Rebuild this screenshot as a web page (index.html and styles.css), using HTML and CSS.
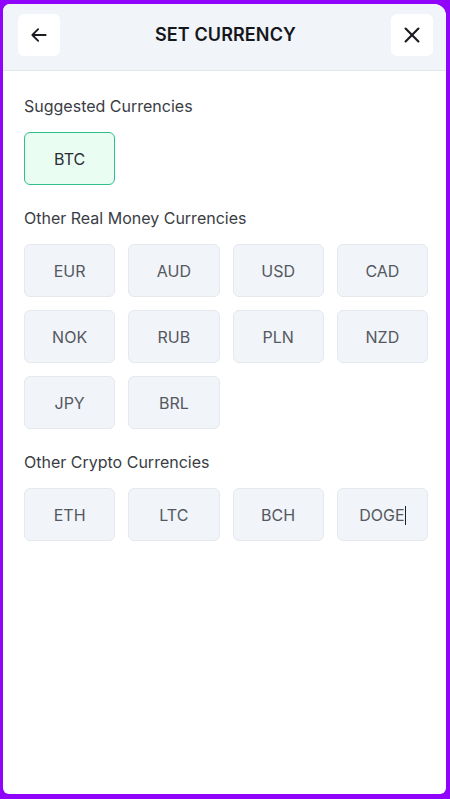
FILE: index.html
```html
<!DOCTYPE html>
<html lang="en">
<head>
  <meta charset="UTF-8"/>
  <meta name="viewport" content="width=device-width, initial-scale=1"/>
  <title>Set Currency</title>
  <link rel="stylesheet" href="styles.css">
</head>
<body>
  <div class="modal">
    <!-- Header -->
    <div class="modal-header">
      <button class="icon-btn" aria-label="Back">
        <svg width="20" height="20" viewBox="0 0 24 24" fill="none" stroke="#1b1d22" stroke-width="2.2" stroke-linecap="round" stroke-linejoin="round"><path d="M20 12H4M11 5l-7 7 7 7"/></svg>
      </button>
      <div class="modal-title">SET CURRENCY</div>
      <button class="icon-btn" aria-label="Close">
        <svg width="22" height="22" viewBox="0 0 24 24" fill="none" stroke="#1b1d22" stroke-width="2.4" stroke-linecap="round"><path d="M5 5l14 14M19 5L5 19"/></svg>
      </button>
    </div>

    <div class="modal-body">
      <div class="section-label">Suggested Currencies</div>
      <div class="cur-grid">
        <button class="cur active">BTC</button>
      </div>

      <div class="section-label">Other Real Money Currencies</div>
      <div class="cur-grid">
        <button class="cur">EUR</button>
        <button class="cur">AUD</button>
        <button class="cur">USD</button>
        <button class="cur">CAD</button>
        <button class="cur">NOK</button>
        <button class="cur">RUB</button>
        <button class="cur">PLN</button>
        <button class="cur">NZD</button>
        <button class="cur">JPY</button>
        <button class="cur">BRL</button>
      </div>

      <div class="section-label">Other Crypto Currencies</div>
      <div class="cur-grid">
        <button class="cur">ETH</button>
        <button class="cur">LTC</button>
        <button class="cur">BCH</button>
        <button class="cur">DOGE<span class="caret"></span></button>
      </div>
    </div>
  </div>
</body>
</html>
```

FILE: styles.css
```css
* { box-sizing: border-box; }
html, body { height: 100%; }
body {
  margin: 0;
  background: #9104fb;
  font-family: Inter, 'Noto Sans', sans-serif;
  padding: 4px 4px 5px 3px;
}

.modal {
  height: 100%;
  background: #fff;
  border-radius: 7px 12px 6px 6px;
  overflow: hidden;
}

/* Header */
.modal-header {
  height: 67px;
  background: #f1f4f8;
  border-bottom: 1px solid #e3e6ea;
  display: flex;
  align-items: center;
  justify-content: space-between;
  padding: 0 13px 5px 15px;
}
.icon-btn {
  width: 42px; height: 42px;
  background: #fff;
  border: none;
  border-radius: 6px;
  display: flex; align-items: center; justify-content: center;
  padding: 0;
}
.modal-title {
  font-size: 18px;
  font-weight: 600;
  color: #15171c;
  letter-spacing: 0.1px;
}

/* Body */
.modal-body {
  padding: 25px 18px 0 21px;
}
.section-label {
  font-size: 16px;
  color: #3a3d44;
  margin-bottom: 16px;
}
.cur-grid {
  display: grid;
  grid-template-columns: repeat(4, 1fr);
  gap: 13px;
  margin-bottom: 23px;
}
.cur {
  height: 53px;
  background: #f1f4f8;
  border: 1px solid #e5e8ec;
  border-radius: 6px;
  font-family: inherit;
  font-size: 16px;
  color: #545861;
  padding: 0;
}
.cur.active {
  background: #eafdf3;
  border-color: #2fbf89;
  color: #2a2d33;
}
.caret {
  display: inline-block;
  width: 1px; height: 19px;
  background: #222;
  vertical-align: -4px;
}
```
